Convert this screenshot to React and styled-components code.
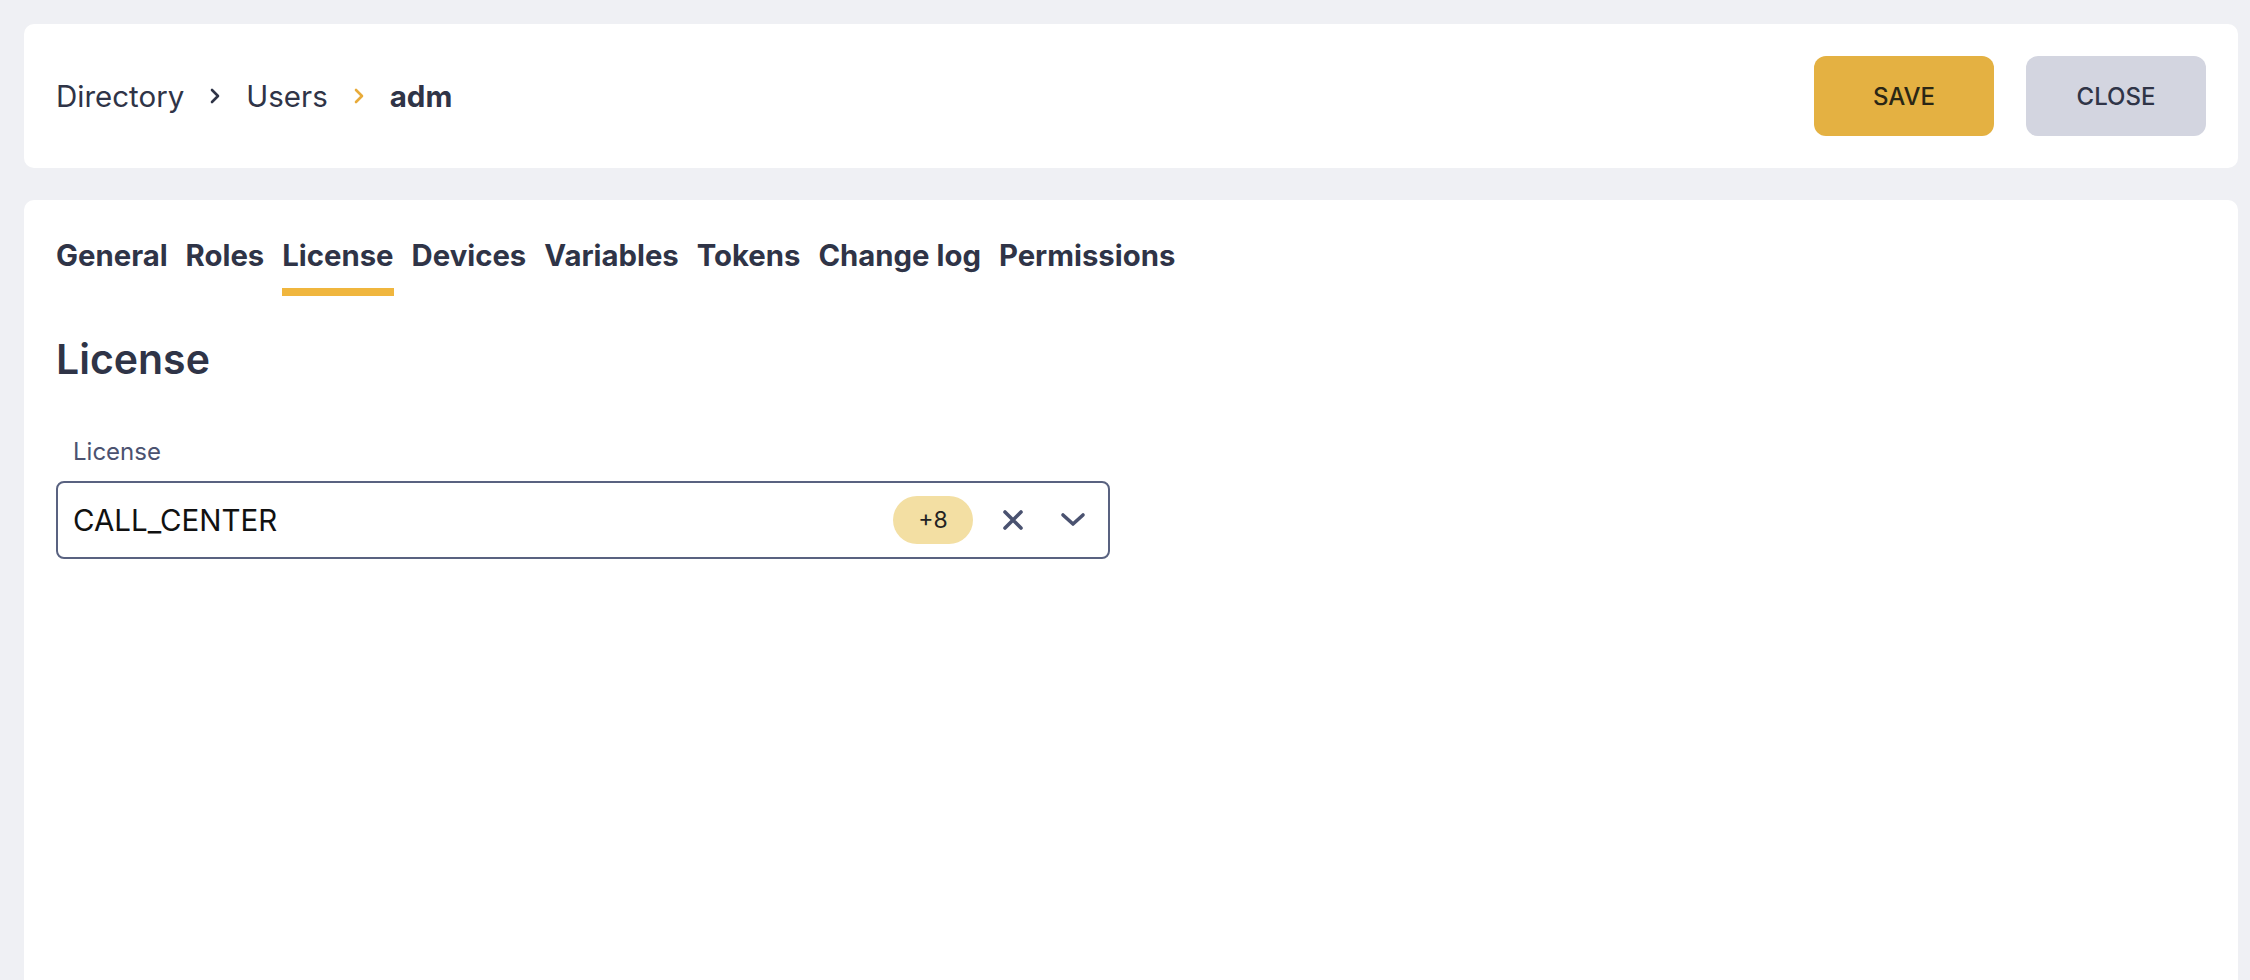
import React from "react";
import styled, { createGlobalStyle } from "styled-components";

const GlobalStyle = createGlobalStyle`
  html, body {
    margin: 0;
    padding: 0;
    background: #eff0f4;
    font-family: Inter, "Open Sans", "Liberation Sans", sans-serif;
    color: #2f3447;
  }
  * { box-sizing: border-box; }
`;

const Page = styled.div`
  height: 100vh;
  overflow: hidden;
  display: flex;
  flex-direction: column;
  gap: 32px;
  padding: 24px 12px 0 24px;
`;

const Card = styled.div`
  background: #fff;
  border-radius: ${(p) => (p.$open ? "10px 10px 0 0" : "10px")};
  padding: 32px;
  ${(p) => p.$grow && "flex: 1;"}
`;

const HeaderCard = styled(Card)`
  display: flex;
  align-items: center;
  justify-content: space-between;
`;

const Crumbs = styled.nav`
  display: flex;
  align-items: center;
  gap: 26px;
  font-size: 29.5px;
`;

const Crumb = styled.span`
  font-weight: ${(p) => (p.$current ? 700 : 400)};
  color: #2f3447;
`;

const Actions = styled.div`
  display: flex;
  gap: 32px;
`;

const Button = styled.button`
  width: 180px;
  height: 80px;
  border: none;
  border-radius: 12px;
  font-family: inherit;
  font-size: 24px;
  font-weight: 500;
  background: ${(p) => (p.$primary ? "#e4b142" : "#d3d5e0")};
  color: ${(p) => (p.$primary ? "#2a2615" : "#2f3447")};
  cursor: pointer;
`;

const Tabs = styled.div`
  display: flex;
  gap: 18px;
  margin-top: 6px;
`;

const Tab = styled.div`
  font-size: 29.3px;
  font-weight: 700;
  line-height: 36px;
  padding-bottom: 14px;
  border-bottom: 8px solid ${(p) => (p.$active ? "#f0b63e" : "transparent")};
  color: #2f3447;
  cursor: pointer;
`;

const Title = styled.h2`
  margin: 38px 0 0;
  font-size: 41px;
  font-weight: 600;
  line-height: 50px;
`;

const Field = styled.div`
  margin-top: 53px;
  width: 1054px;
  display: flex;
  flex-direction: column;
  gap: 14px;
`;

const Label = styled.label`
  padding-left: 17px;
  font-size: 24px;
  line-height: 30px;
  color: #4b5270;
`;

const SelectBox = styled.div`
  height: 78px;
  border: 2px solid #596280;
  border-radius: 8px;
  padding: 0 15px 0 15px;
  display: flex;
  align-items: center;
  gap: 20px;
`;

const Value = styled.span`
  flex: 1;
  font-size: 29.5px;
  color: #111;
`;

const Badge = styled.span`
  width: 80px;
  height: 48px;
  border-radius: 24px;
  background: #f3dfa3;
  color: #222;
  font-size: 23px;
  display: flex;
  align-items: center;
  justify-content: center;
`;

const IconButton = styled.span`
  width: 40px;
  height: 40px;
  display: flex;
  align-items: center;
  justify-content: center;
  color: #4a5270;
  cursor: pointer;
`;

const Chevron = ({ color }) => (
  <svg width="10" height="16" viewBox="0 0 10 16" fill="none">
    <polyline
      points="2,2 8,8 2,14"
      stroke={color}
      strokeWidth="2.6"
      strokeLinecap="round"
      strokeLinejoin="round"
    />
  </svg>
);

const tabs = [
  "General",
  "Roles",
  "License",
  "Devices",
  "Variables",
  "Tokens",
  "Change log",
  "Permissions",
];

export default function App() {
  return (
    <>
      <GlobalStyle />
      <Page>
        <HeaderCard>
          <Crumbs>
            <Crumb>Directory</Crumb>
            <Chevron color="#2f3447" />
            <Crumb>Users</Crumb>
            <Chevron color="#e8ab3a" />
            <Crumb $current>adm</Crumb>
          </Crumbs>
          <Actions>
            <Button $primary>SAVE</Button>
            <Button>CLOSE</Button>
          </Actions>
        </HeaderCard>

        <Card $grow $open>
          <Tabs>
            {tabs.map((t) => (
              <Tab key={t} $active={t === "License"}>
                {t}
              </Tab>
            ))}
          </Tabs>

          <Title>License</Title>

          <Field>
            <Label>License</Label>
            <SelectBox>
              <Value>CALL_CENTER</Value>
              <Badge>+8</Badge>
              <IconButton>
                <svg width="22" height="22" viewBox="0 0 22 22" fill="none">
                  <path
                    d="M3 3 L19 19 M19 3 L3 19"
                    stroke="currentColor"
                    strokeWidth="3.6"
                    strokeLinecap="round"
                  />
                </svg>
              </IconButton>
              <IconButton>
                <svg width="26" height="16" viewBox="0 0 26 16" fill="none">
                  <polyline
                    points="3,3 13,12 23,3"
                    stroke="currentColor"
                    strokeWidth="3.6"
                    strokeLinecap="round"
                    strokeLinejoin="round"
                  />
                </svg>
              </IconButton>
            </SelectBox>
          </Field>
        </Card>
      </Page>
    </>
  );
}
